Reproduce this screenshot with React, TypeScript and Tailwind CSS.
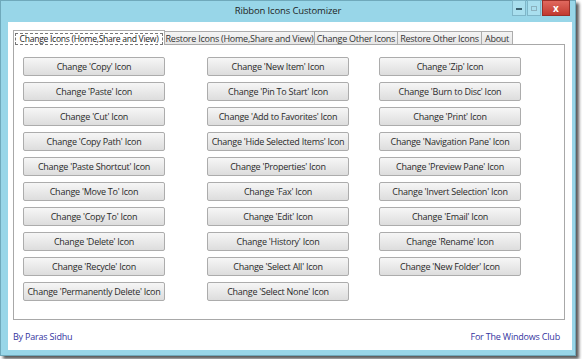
import React from 'react';

const COLUMNS = [
  {
    offset: 'ml-[9px]',
    items: ['Copy', 'Paste', 'Cut', 'Copy Path', 'Paste Shortcut', 'Move To', 'Copy To', 'Delete', 'Recycle', 'Permanently Delete'],
  },
  {
    offset: 'ml-[42px]',
    items: ['New Item', 'Pin To Start', 'Add to Favorites', 'Hide Selected Items', 'Properties', 'Fax', 'Edit', 'History', 'Select All', 'Select None'],
  },
  {
    offset: 'ml-[30px]',
    items: ['Zip', 'Burn to Disc', 'Print', 'Navigation Pane', 'Preview Pane', 'Invert Selection', 'Email', 'Rename', 'New Folder'],
  },
];

const TABS = [
  { label: 'Restore Icons (Home,Share and View)', w: 'w-[150px]' },
  { label: 'Change Other Icons', w: 'w-[83px]' },
  { label: 'Restore Other Icons', w: 'w-[84px]' },
  { label: 'About', w: 'w-[31px]' },
];

const IconButton = ({ label }: { label: string }) => (
  <button className="w-[142px] h-[19px] rounded-[2px] border border-[#acacac] bg-gradient-to-b from-[#f6f6f6] to-[#dddddd] text-[9px] tracking-[-0.25px] leading-none text-[#2a2a2a] flex items-center justify-center whitespace-nowrap">
    Change '{label}' Icon
  </button>
);

export default function App() {
  return (
    <div className="w-[582px] h-[359px] bg-white overflow-hidden font-['Open_Sans',sans-serif]">
      <div className="w-[576px] h-[356px] bg-[#98d6e8] border border-[#6fa9bb] shadow-[3px_3px_3px_rgba(0,0,0,0.65)] flex flex-col">
        {/* title bar */}
        <div className="relative h-[21px] flex items-center justify-center shrink-0">
          <span className="text-[9.5px] tracking-[-0.15px] text-[#1e1e1e] pb-[1px]">Ribbon Icons Customizer</span>
          <div className="absolute top-[-1px] right-[5px] flex items-start gap-[1px]">
            <div className="w-[14px] h-[16px] border border-[#7fb6c8] bg-[#a9dfee] flex items-end justify-center pb-[5px]">
              <div className="w-[6px] h-[2px] bg-[#3b5f6d]" />
            </div>
            <div className="w-[14px] h-[16px] border border-[#7fb6c8] bg-[#a9dfee] flex items-center justify-center">
              <div className="w-[6px] h-[5px] border border-[#8cb2bf]" />
            </div>
            <div className="w-[28px] h-[16px] border border-[#9b3029] bg-gradient-to-b from-[#e0685e] to-[#c23a30] flex items-center justify-center text-white text-[10px] font-bold leading-none">
              x
            </div>
          </div>
        </div>

        {/* client area */}
        <div className="ml-[7px] mr-[3px] mb-[5px] flex-1 bg-white flex flex-col pl-[5px] pr-[7px] pt-[7px]">
          <div className="flex items-end h-[15px] text-[9px] tracking-[-0.25px] leading-none text-[#222] whitespace-nowrap">
            <div className="h-[15px] w-[152px] bg-white border border-b-0 border-[#acacac] px-[1px] pt-[2px] relative z-10 -mb-[1px]">
              <div className="h-[12px] border border-dashed border-[#777] flex items-center justify-center text-[8.6px] tracking-[-0.3px]">
                Change Icons (Home,Share and View)
              </div>
            </div>
            {TABS.map((tab) => (
              <div
                key={tab.label}
                className={`${tab.w} h-[13px] bg-gradient-to-b from-[#f4f4f4] to-[#e6e6e6] border border-b-0 border-l-0 border-[#acacac] flex items-center justify-center text-[#333]`}
              >
                {tab.label}
              </div>
            ))}
          </div>

          <div className="h-[276px] border border-[#a8a8a8] flex items-start pt-[12px]">
            {COLUMNS.map((col, i) => (
              <div key={i} className={`${col.offset} flex flex-col gap-[6px]`}>
                {col.items.map((label) => (
                  <IconButton key={label} label={label} />
                ))}
              </div>
            ))}
          </div>

          <div className="flex-1 flex items-center justify-between text-[9px] tracking-[-0.2px] text-[#3434a0] pt-[4px] pr-[5px]">
            <span>By Paras Sidhu</span>
            <span>For The Windows Club</span>
          </div>
        </div>
      </div>
    </div>
  );
}
